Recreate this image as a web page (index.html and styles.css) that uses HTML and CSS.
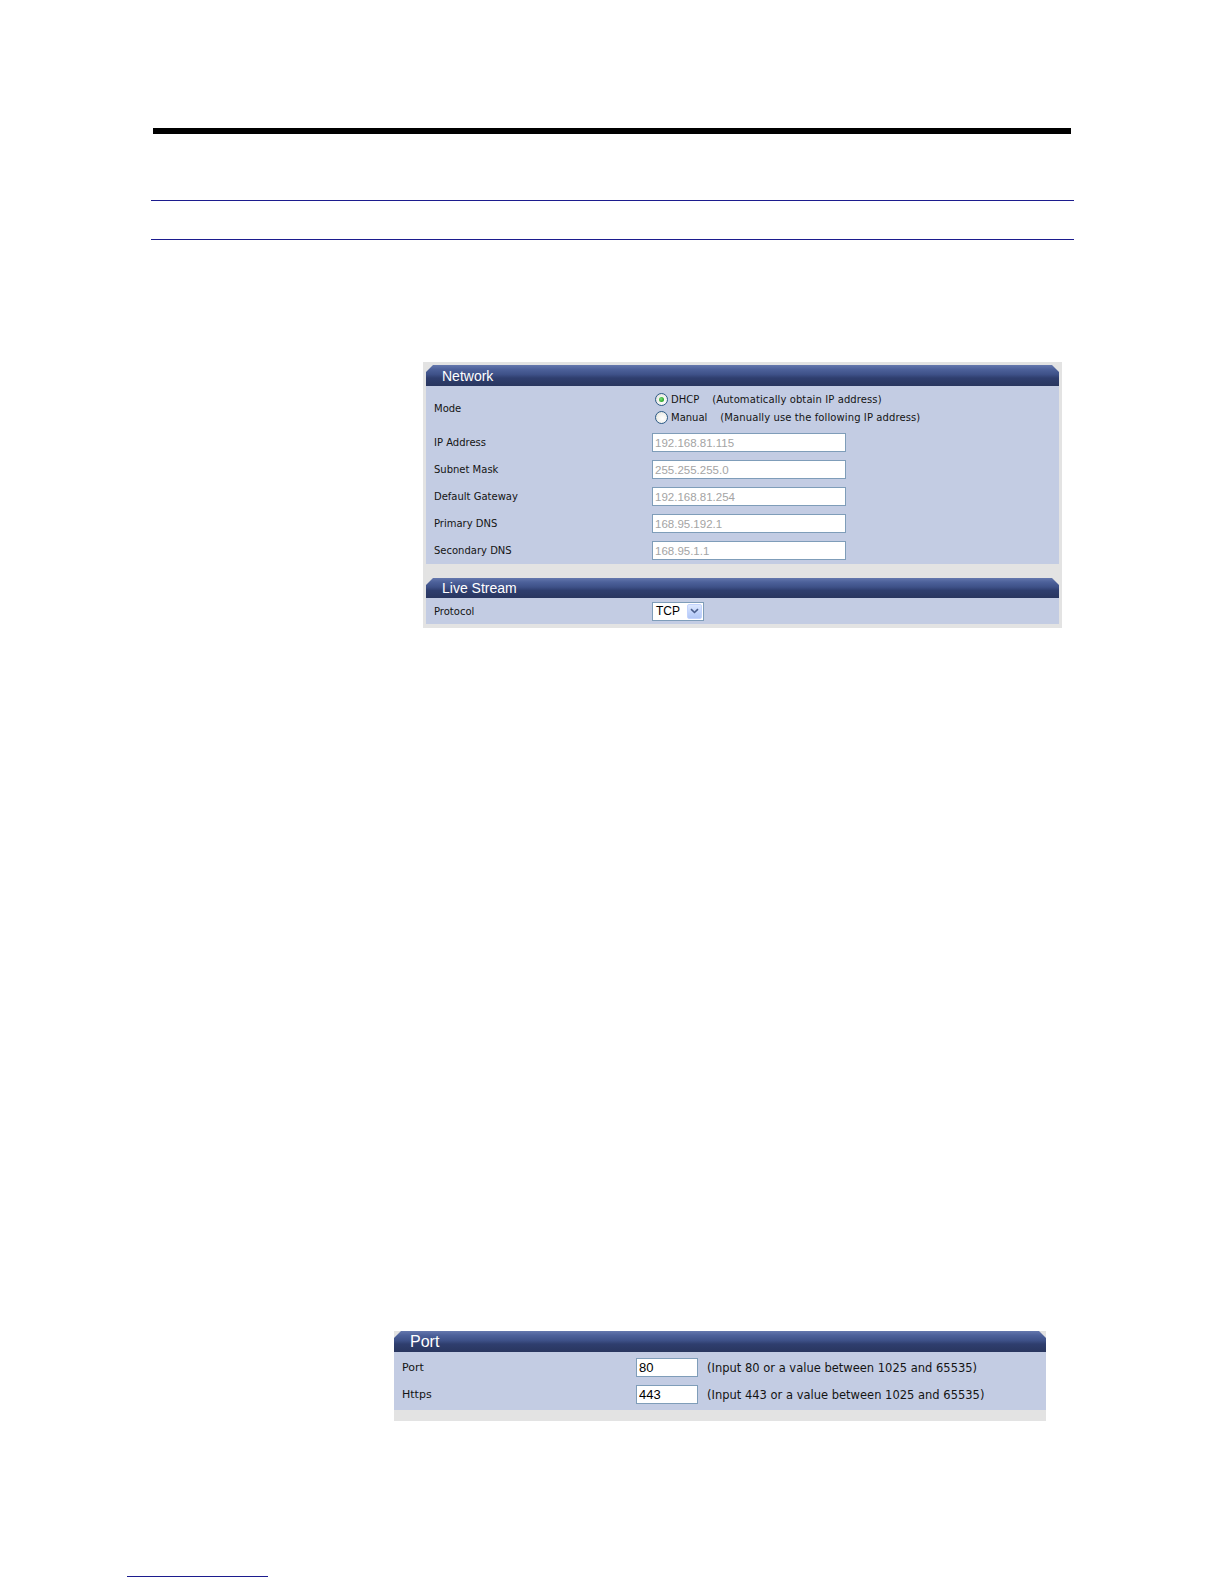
FILE: index.html
```html
<!DOCTYPE html>
<html lang="en">
<head>
<meta charset="utf-8">
<title>Network settings</title>
<link rel="stylesheet" href="styles.css">
</head>
<body>
<div class="page">
  <div class="top-rule"></div>
  <div class="title-band"></div>

  <section class="panel panel-network">
    <div class="panel-head">Network</div>
    <div class="panel-body">
      <div class="row row-mode">
        <div class="label">Mode</div>
        <div class="value radios">
          <div class="radio-line"><span class="radio checked"></span><span class="opt">DHCP</span><span class="hint">(Automatically obtain IP address)</span></div>
          <div class="radio-line"><span class="radio"></span><span class="opt">Manual</span><span class="hint">(Manually use the following IP address)</span></div>
        </div>
      </div>
      <div class="row"><div class="label">IP Address</div><div class="value"><input class="field field-ip" type="text" value="192.168.81.115" readonly></div></div>
      <div class="row"><div class="label">Subnet Mask</div><div class="value"><input class="field field-ip" type="text" value="255.255.255.0" readonly></div></div>
      <div class="row"><div class="label">Default Gateway</div><div class="value"><input class="field field-ip" type="text" value="192.168.81.254" readonly></div></div>
      <div class="row"><div class="label">Primary DNS</div><div class="value"><input class="field field-ip" type="text" value="168.95.192.1" readonly></div></div>
      <div class="row"><div class="label">Secondary DNS</div><div class="value"><input class="field field-ip" type="text" value="168.95.1.1" readonly></div></div>
    </div>
    <div class="panel-gap"></div>
    <div class="panel-head">Live Stream</div>
    <div class="panel-body">
      <div class="row row-protocol">
        <div class="label">Protocol</div>
        <div class="value">
          <div class="select"><span class="select-text">TCP</span><span class="select-btn"><svg width="9" height="6" viewBox="0 0 9 6"><path d="M1 1.2 L4.5 4.5 L8 1.2" fill="none" stroke="#4a5e8c" stroke-width="1.6"/></svg></span></div>
        </div>
      </div>
    </div>
  </section>

  <section class="panel panel-port">
    <div class="panel-head">Port</div>
    <div class="panel-body">
      <div class="row"><div class="label">Port</div><div class="value"><input class="field field-port" type="text" value="80" readonly><span class="hint">(Input 80 or a value between 1025 and 65535)</span></div></div>
      <div class="row"><div class="label">Https</div><div class="value"><input class="field field-port" type="text" value="443" readonly><span class="hint">(Input 443 or a value between 1025 and 65535)</span></div></div>
    </div>
  </section>

  <div class="foot-rule"></div>
</div>
</body>
</html>
```
FILE: styles.css
```css
html, body {
  margin: 0;
  padding: 0;
  background: #ffffff;
}

.page {
  padding-top: 128px;
  height: 1456px;
  font-family: "DejaVu Sans", Verdana, sans-serif;
  color: #141414;
}

.top-rule {
  margin-left: 153px;
  width: 918px;
  height: 6px;
  background: #000;
}

.title-band {
  margin-top: 66px;
  margin-left: 151px;
  width: 923px;
  height: 38px;
  border-top: 1px solid #1c1c8e;
  border-bottom: 1px solid #1c1c8e;
}

/* ---------- panels ---------- */
.panel {
  background: #e3e3e3;
  box-sizing: border-box;
}

.panel-network {
  margin-top: 122px;
  margin-left: 423px;
  width: 639px;
  padding: 3px 3px 4px 3px;
}

.panel-head {
  height: 21px;
  line-height: 22px;
  padding-left: 16px;
  color: #fff;
  font-family: "Liberation Sans", Arial, sans-serif;
  font-size: 14px;
  background: linear-gradient(to bottom, #6578ad 0%, #4d619a 20%, #3e5188 45%, #2f3e6e 62%, #29365f 100%);
  clip-path: polygon(7px 0, calc(100% - 7px) 0, 100% 7px, 100% 100%, 0 100%, 0 7px);
}

.panel-body {
  background: #c3cce3;
}

.panel-gap {
  height: 14px;
}

.panel-network .panel-gap + .panel-head {
  height: 20px;
  line-height: 21px;
}

.row {
  display: grid;
  grid-template-columns: 226px 1fr;
  align-items: center;
  height: 27px;
  font-size: 10px;
}

.label {
  padding-left: 8px;
}

.value {
  display: flex;
  align-items: center;
}

.row-mode {
  height: 43px;
  padding-top: 4px;
  padding-bottom: 3px;
  box-sizing: border-box;
}

.radios {
  flex-direction: column;
  align-items: flex-start;
}

.radio-line {
  display: flex;
  align-items: center;
  height: 18px;
  padding-left: 3px;
}

.radio {
  width: 11px;
  height: 11px;
  border-radius: 50%;
  border: 1px solid #2c5a86;
  background: radial-gradient(circle at 60% 60%, #ffffff 0%, #f2f2ee 50%, #d6d6ce 100%);
  position: relative;
  flex: none;
}

.radio.checked::after {
  content: "";
  position: absolute;
  left: 3px;
  top: 3px;
  width: 5px;
  height: 5px;
  border-radius: 50%;
  background: radial-gradient(circle at 40% 40%, #7be07b 0%, #36b036 55%, #1f8a1f 100%);
}

.opt {
  margin-left: 3px;
}

.radio-line .hint {
  margin-left: 13px;
  letter-spacing: 0.1px;
}

.field {
  box-sizing: border-box;
  margin: 0;
  border: 1px solid #7f9db9;
  background: #fff;
  font-family: "Liberation Sans", Arial, sans-serif;
  outline: none;
}

.field-ip {
  width: 194px;
  height: 19px;
  padding: 0 2px;
  font-size: 11.5px;
  color: #a4a4a4;
}

.row-protocol {
  height: 26px;
}

.select {
  display: flex;
  align-items: center;
  box-sizing: border-box;
  width: 52px;
  height: 19px;
  border: 1px solid #7f9db9;
  background: #fff;
  padding: 1px;
}

.select-text {
  flex: 1;
  padding-left: 2px;
  font-family: "Liberation Sans", Arial, sans-serif;
  font-size: 12px;
  color: #000;
}

.select-btn {
  width: 15px;
  height: 15px;
  box-sizing: border-box;
  border: 1px solid #c3d3fd;
  border-radius: 2px;
  background: linear-gradient(to bottom, #dde8fe 0%, #c1d3fb 60%, #b2c7f5 100%);
  display: flex;
  align-items: center;
  justify-content: center;
}

/* ---------- port panel ---------- */
.panel-port {
  margin-top: 703px;
  margin-left: 394px;
  width: 652px;
  padding-bottom: 11px;
}

.panel-port .panel-head {
  font-size: 16px;
  line-height: 21px;
}

.panel-port .panel-body {
  padding-top: 2px;
  padding-bottom: 2px;
}

.panel-port .row {
  grid-template-columns: 242px 1fr;
  font-size: 11px;
}

.field-port {
  width: 62px;
  height: 19px;
  padding: 0 2px;
  font-size: 13px;
  color: #000;
}

.panel-port .hint {
  margin-left: 9px;
  font-size: 11.5px;
}

.foot-rule {
  margin-top: 155px;
  margin-left: 127px;
  width: 141px;
  height: 1px;
  background: #1c1c8e;
}
```
